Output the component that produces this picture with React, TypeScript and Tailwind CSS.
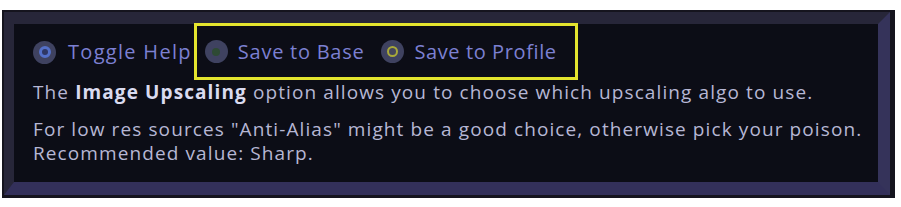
import React from "react";

function Radio({ kind }: { kind: "blue" | "green" | "yellow" }) {
  return (
    <span className="w-[23px] h-[23px] rounded-full bg-[#3f4260] flex items-center justify-center shrink-0">
      {kind === "blue" && (
        <span className="w-[12px] h-[12px] rounded-full border-[3px] border-[#5470c8] bg-[#2f3764]" />
      )}
      {kind === "green" && <span className="w-[8px] h-[8px] rounded-full bg-[#2e4a34]" />}
      {kind === "yellow" && (
        <span className="w-[11px] h-[11px] rounded-full border-2 border-[#a9a93a] bg-[#45465c]" />
      )}
    </span>
  );
}

export default function App() {
  return (
    <div
      className="w-[901px] h-[207px] bg-white pt-[10px] pl-[2px]"
      style={{ fontFamily: '"Open Sans", sans-serif' }}
    >
      <div className="w-[893px] h-[188px] bg-[#15141e] pt-[2px] pl-[2px] pr-[5px] pb-[3px] flex">
        <div className="flex-1 flex border-t-[12px] border-l-[10px] border-r-[12px] border-b-[13px] border-t-[#272639] border-l-[#272639] border-r-[#35335a] border-b-[#33305a]">
          <div className="flex-1 bg-[#0c0d16] pl-[19px] flex flex-col">
            <div className="flex items-center h-[56px]">
              <Radio kind="blue" />
              <span className="ml-[12px] text-[20px] text-[#7c80d2] tracking-[1.3px]">Toggle Help</span>
              <div className="ml-[2px] -mt-[1px] h-[57px] border-[3px] border-[#e4e42e] flex items-center pl-[8px] pr-[18px]">
                <Radio kind="green" />
                <span className="ml-[10px] text-[20px] text-[#7c80d2] tracking-[0.75px]">Save to Base</span>
                <span className="ml-[17px]">
                  <Radio kind="yellow" />
                </span>
                <span className="ml-[10px] text-[20px] text-[#7c80d2] tracking-[0.6px]">Save to Profile</span>
              </div>
            </div>
            <p className="text-[19px] leading-[24px] text-[#b6b7d4] tracking-[1.1px]">
              The <span className="font-bold text-[#dadbf0]">Image Upscaling</span> option allows you to choose which upscaling algo to use.
            </p>
            <p className="mt-[13px] text-[19px] leading-[24px] text-[#b6b7d4] tracking-[1.1px]">
              For low res sources "Anti-Alias" might be a good choice, otherwise pick your poison.
              <br />
              Recommended value: Sharp.
            </p>
          </div>
        </div>
      </div>
    </div>
  );
}
